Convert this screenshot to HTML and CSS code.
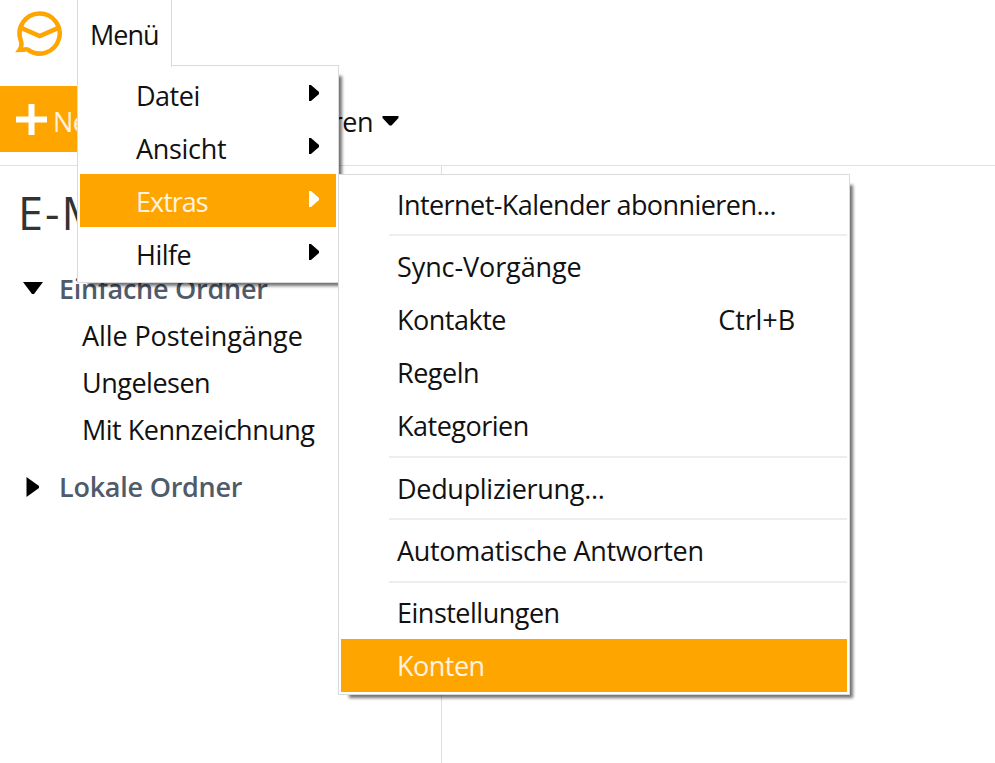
FILE: index.html
```html
<!DOCTYPE html>
<html lang="de">
<head>
  <meta charset="UTF-8" />
  <meta name="viewport" content="width=device-width, initial-scale=1.0" />
  <title>E-Mail</title>
  <link rel="stylesheet" href="styles.css">
</head>
<body>
  <div class="app">
    <header class="topbar">
      <svg class="logo" viewBox="0 0 46 46" fill="none" stroke="#ffa500" stroke-width="4.4">
        <path d="M5.6 29.5 A19.6 19.6 0 1 1 12.5 38.8 Q11 38.2 9 38.8 L4.6 39 Q7.5 35 5.6 29.5 Z"/>
        <path d="M6 17.5 L24.2 25.5 L42.5 17.5"/>
      </svg>
      <div class="menu-tab"><span class="tight">Menü</span></div>
    </header>

    <div class="toolbar">
      <button class="new-btn">
        <svg width="31" height="31" viewBox="0 0 31 31"><path d="M12.5 0h6v12.5H31v6H18.5V31h-6V18.5H0v-6h12.5z" fill="#fff"/></svg>
        <span>Neu</span>
      </button>
      <div class="refresh">
        <span>Aktualisieren</span>
        <svg width="17" height="10" viewBox="0 0 17 10"><path d="M.5 0h16v2L9.5 9.5h-2L.5 2z"/></svg>
      </div>
    </div>

    <div class="main">
      <aside class="sidebar">
        <h1>E-Mail</h1>
        <div class="folder-head">
          <svg width="20" height="20" viewBox="0 0 20 20"><path d="M0 4h20L11 16H9z"/></svg>
          <span>Einfache Ordner</span>
        </div>
        <div class="folder"><span class="wide">Alle Posteingänge</span></div>
        <div class="folder"><span>Ungelesen</span></div>
        <div class="folder"><span>Mit Kennzeichnung</span></div>
        <div class="folder-head local">
          <svg width="20" height="20" viewBox="0 0 20 20"><path d="M3.5 0L16 9v2L3.5 20z"/></svg>
          <span>Lokale Ordner</span>
        </div>
      </aside>
      <section class="content"></section>
    </div>

    <nav class="menu main-menu">
      <div class="item"><span>Datei</span><svg class="arrow" viewBox="0 0 10 16"><path d="M0 0h2l8 7v2l-8 7H0z"/></svg></div>
      <div class="item"><span class="loose">Ansicht</span><svg class="arrow" viewBox="0 0 10 16"><path d="M0 0h2l8 7v2l-8 7H0z"/></svg></div>
      <div class="item active"><span class="tight">Extras</span><svg class="arrow" viewBox="0 0 10 16"><path d="M0 0h2l8 7v2l-8 7H0z"/></svg></div>
      <div class="item"><span>Hilfe</span><svg class="arrow" viewBox="0 0 10 16"><path d="M0 0h2l8 7v2l-8 7H0z"/></svg></div>
    </nav>

    <nav class="menu sub-menu">
      <div class="item"><span class="long">Internet-Kalender abonnieren...</span></div>
      <div class="sep"></div>
      <div class="item"><span class="wide">Sync-Vorgänge</span></div>
      <div class="item"><span>Kontakte</span><span class="key">Ctrl+B</span></div>
      <div class="item"><span>Regeln</span></div>
      <div class="item"><span>Kategorien</span></div>
      <div class="sep"></div>
      <div class="item"><span class="loose">Deduplizierung...</span></div>
      <div class="sep"></div>
      <div class="item"><span class="loose">Automatische Antworten</span></div>
      <div class="sep"></div>
      <div class="item"><span>Einstellungen</span></div>
      <div class="item active"><span>Konten</span></div>
    </nav>
  </div>
</body>
</html>
```

FILE: styles.css
```css
* {
  box-sizing: border-box;
}
body {
  margin: 0;
  font-family: "Open Sans", "Noto Sans", sans-serif;
  font-size: 27px;
  letter-spacing: -0.5px;
  color: #111;
  background: #fff;
}
svg {
  flex: none;
}
span {
  white-space: nowrap;
}
.tight {
  letter-spacing: -1px;
}
.long {
  letter-spacing: -0.57px;
}
.loose {
  letter-spacing: -0.3px;
}
.wide {
  letter-spacing: -0.1px;
}
.app {
  position: relative;
  display: flex;
  flex-direction: column;
  height: 763px;
  overflow: hidden;
}
.topbar {
  display: flex;
  height: 66px;
  padding-left: 15px;
}
.logo {
  width: 47px;
  height: 47px;
  margin-top: 10px;
}
.menu-tab {
  position: relative;
  z-index: 3;
  display: flex;
  align-items: center;
  width: 95px;
  height: 67px;
  margin-left: 15px;
  padding: 1px 0 0 12px;
  background: #fff;
  border: 1px solid #dadada;
  border-width: 0 1px 0 1px;
}
.toolbar {
  display: flex;
  align-items: center;
  width: 399px;
  height: 99px;
  padding-top: 7px;
}
.new-btn {
  display: flex;
  align-items: center;
  gap: 6px;
  width: 125px;
  height: 66px;
  padding: 0 0 0 16px;
  border: none;
  background: #ffa500;
  color: #fff3e0;
  font: inherit;
  letter-spacing: inherit;
}
.new-btn span {
  margin-top: 4px;
}
.refresh {
  display: flex;
  align-items: center;
  gap: 9px;
  margin-left: auto;
  padding-top: 4px;
}
.main {
  display: flex;
  flex: 1;
  border-top: 1px solid #e2e2e2;
}
.sidebar {
  width: 442px;
  border-right: 1px solid #dedede;
}
.content {
  flex: 1;
}
h1 {
  margin: 12px 0 15px 18px;
  font-size: 45px;
  line-height: 70px;
  font-weight: 400;
  letter-spacing: 2px;
  color: #333;
}
.folder-head {
  display: flex;
  align-items: center;
  gap: 16px;
  height: 50px;
  padding-left: 23px;
  font-weight: 600;
  letter-spacing: -0.25px;
  color: #4f5b69;
}
.folder {
  display: flex;
  align-items: center;
  height: 47px;
  padding-left: 82px;
}
.folder span {
  margin-top: -2px;
}
.local {
  height: 65px;
}

/* popup menus */
.menu {
  position: absolute;
  padding: 2px;
  background: #fff;
  border: 1px solid #dadada;
  box-shadow: 7px 7px 3px -4px rgba(0, 0, 0, 0.55);
}
.main-menu {
  left: 77px;
  top: 65px;
  z-index: 1;
  width: 262px;
}
.sub-menu {
  left: 338px;
  top: 174px;
  z-index: 4;
  width: 512px;
}
.item {
  display: flex;
  align-items: center;
  justify-content: space-between;
  height: 53px;
  padding: 1px 17px 0 56px;
}
.sub-menu .item {
  height: 53.1px;
}
.active {
  background: #ffa500;
  color: #fff3e0;
}
.arrow {
  width: 10px;
  height: 16px;
  margin-bottom: 4px;
}
.active .arrow {
  fill: #fff;
}
.key {
  margin-right: 35px;
  letter-spacing: -0.1px;
}
.sep {
  height: 2px;
  margin: 4px 0 3.3px 48px;
  background: #eee;
}
```
